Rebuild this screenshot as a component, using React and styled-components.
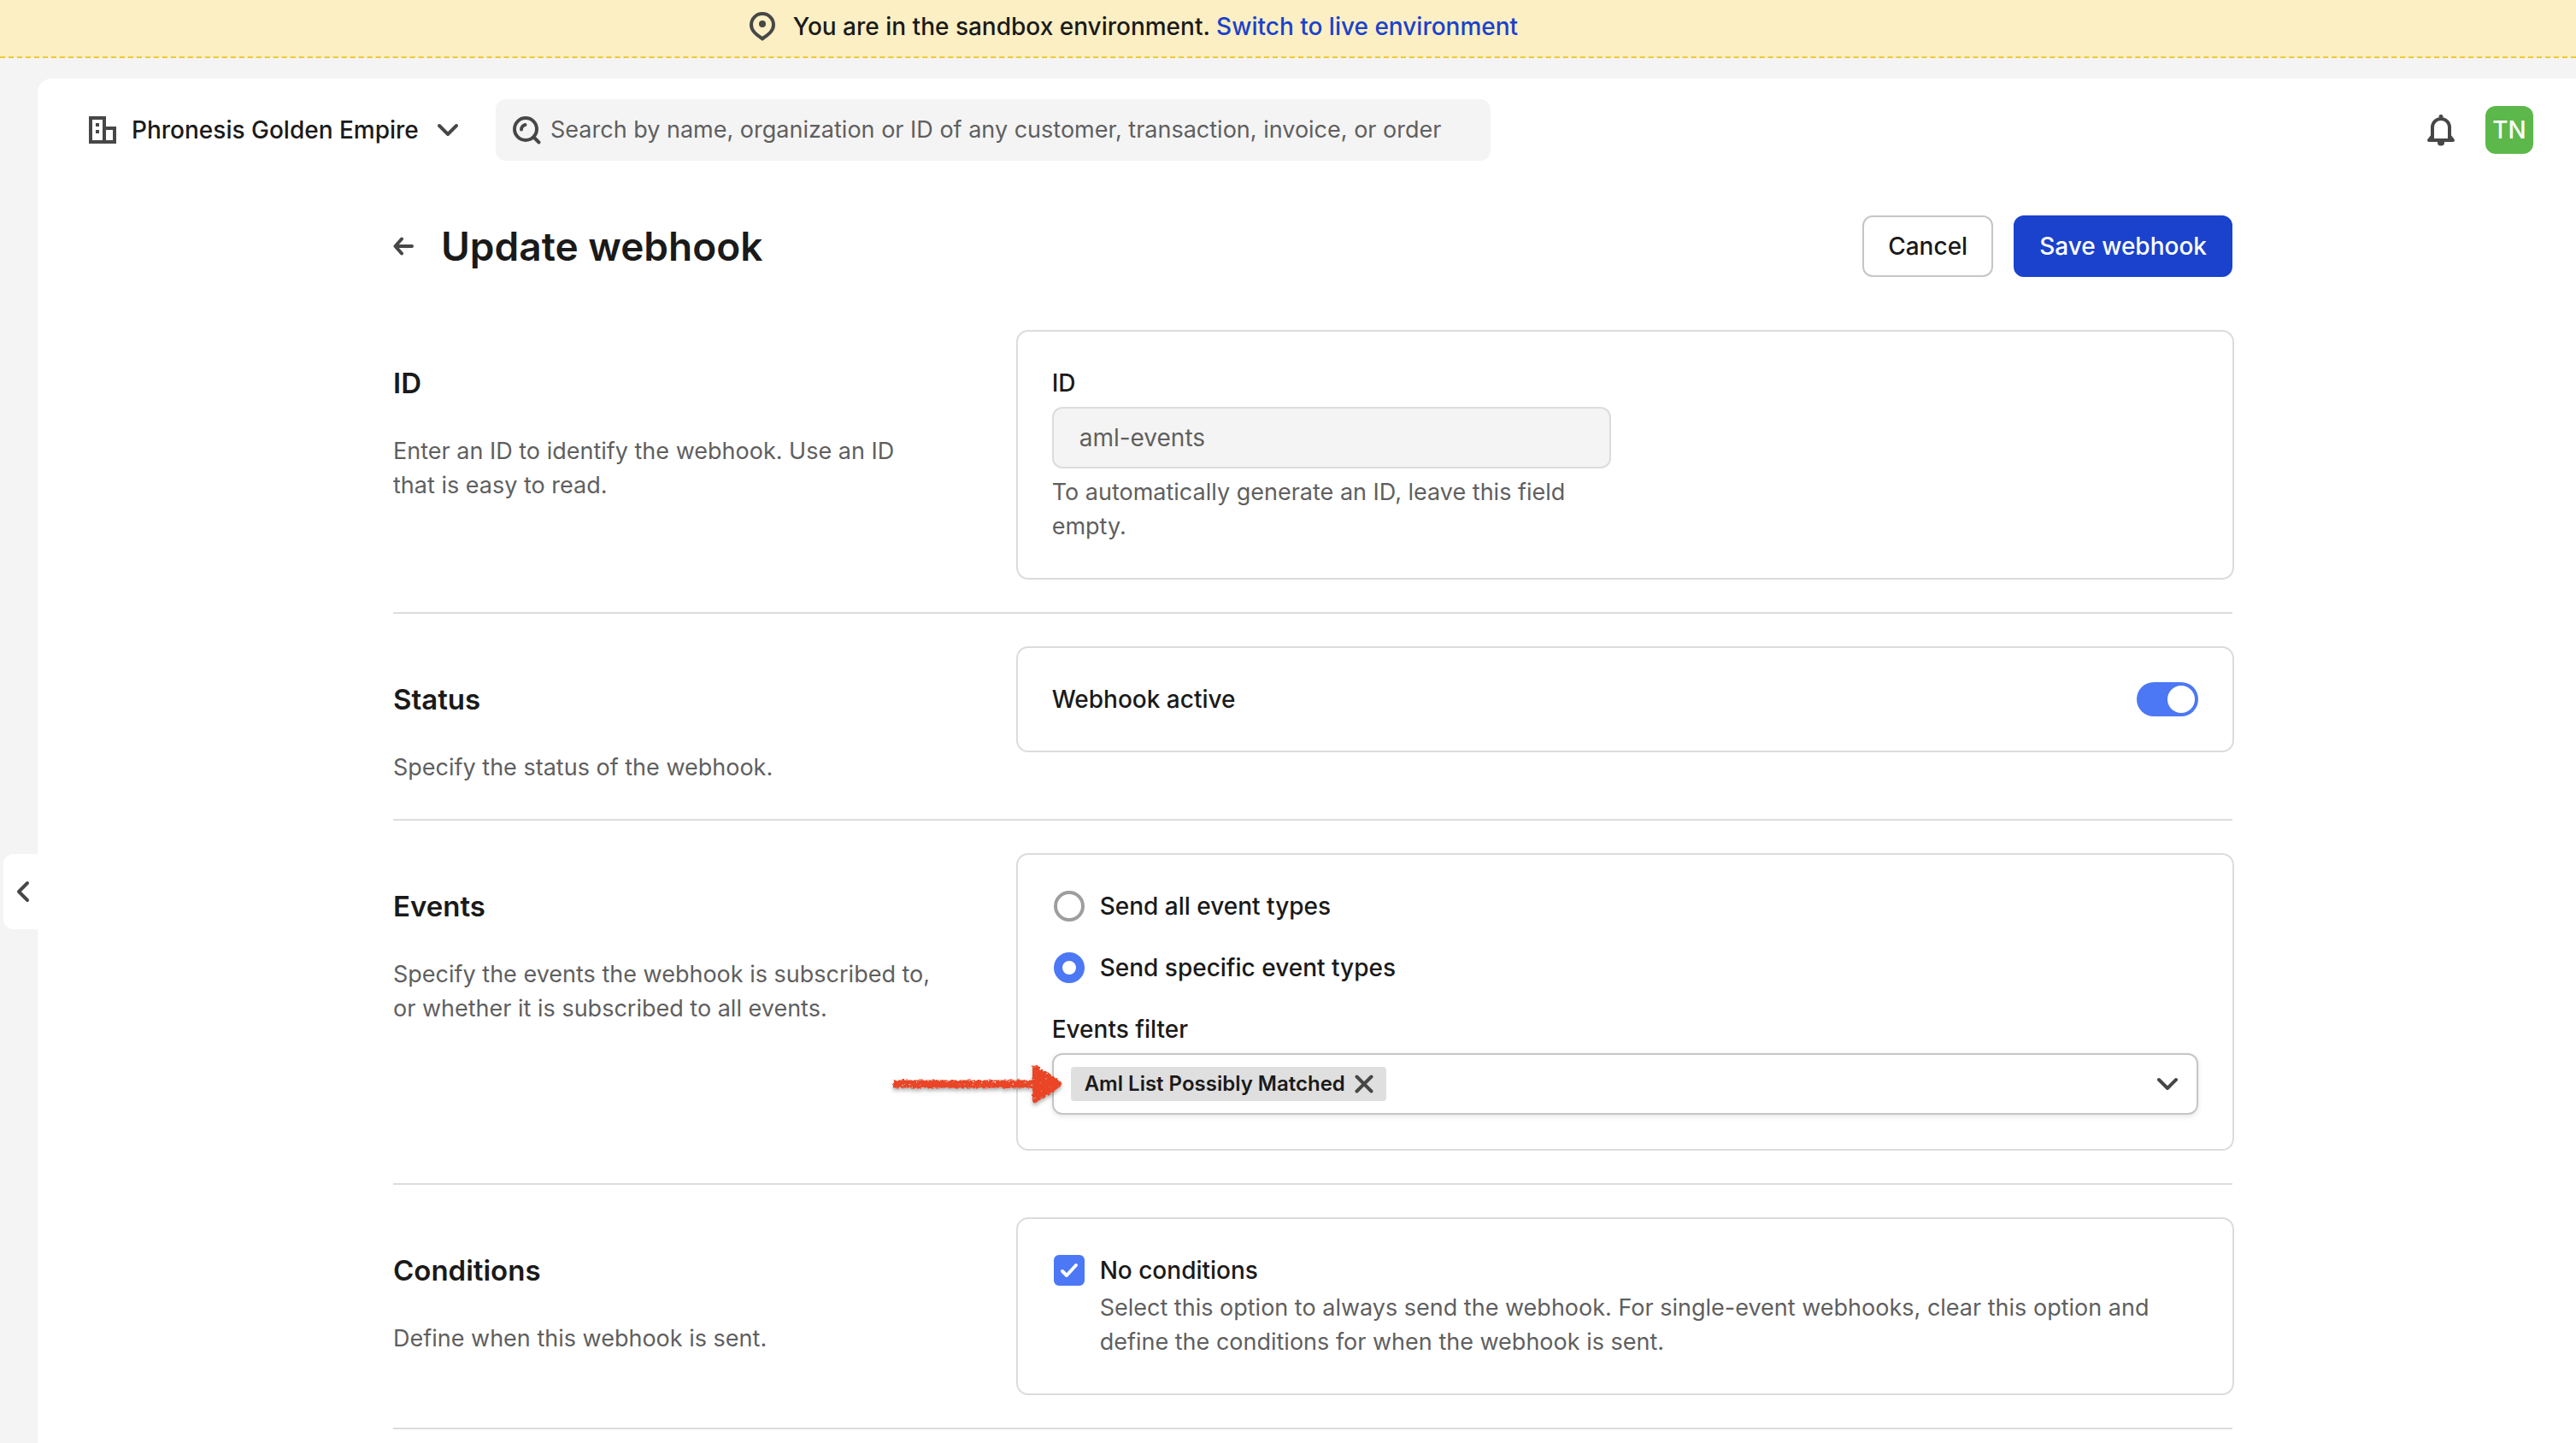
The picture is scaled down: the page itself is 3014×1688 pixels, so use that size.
import React, { useState } from "react";
import styled, { createGlobalStyle } from "styled-components";

const color = {
  text: "#1a1a1a",
  muted: "#5f5f5f",
  icon: "#474747",
  line: "#dcdcdc",
  control: "#c6c6c6",
  surface: "#f4f4f4",
  primary: "#1a42cc",
  accent: "#4c78f5",
};

const GlobalStyle = createGlobalStyle`
  *, *::before, *::after { box-sizing: border-box; }
  body {
    margin: 0;
    background: ${color.surface};
    color: ${color.text};
    font: 400 28px/40px Inter, "Liberation Sans", sans-serif;
  }
  button, input { font: inherit; color: inherit; }
  h1, h2, p { margin: 0; }
`;

const Page = styled.div`
  min-height: 100vh;
  display: flex;
  flex-direction: column;
`;

const Banner = styled.div`
  display: flex;
  justify-content: center;
  gap: 16px;
  height: 68px;
  padding: 11px 366px 0 0;
  background: #fbefc3;
  border-bottom: 2px dashed #ecc83c;
  font-weight: 500;
  white-space: nowrap;
`;

const BannerLink = styled.a`
  color: ${color.primary};
  text-decoration: none;
`;

const Body = styled.div`
  flex: 1;
  display: flex;
`;

const Rail = styled.aside`
  flex: 0 0 44px;
  padding: 931px 0 0 4px;
`;

const RailToggle = styled.button`
  display: flex;
  align-items: center;
  justify-content: center;
  width: 40px;
  height: 88px;
  padding: 0;
  border: 0;
  border-radius: 12px 0 0 12px;
  background: #fff;
`;

const Shell = styled.div`
  flex: 1;
  min-width: 0;
  margin-top: 24px;
  background: #fff;
  border-top-left-radius: 16px;
`;

const TopBar = styled.header`
  display: flex;
  align-items: center;
  padding: 24px 50px 24px 56px;
`;

const OrgButton = styled.button`
  display: flex;
  align-items: center;
  gap: 14px;
  width: 480px;
  padding: 0;
  border: 0;
  background: none;
  font-weight: 500;
  white-space: nowrap;
`;

const SearchBox = styled.label`
  display: flex;
  align-items: center;
  gap: 8px;
  width: 1164px;
  height: 72px;
  padding: 0 16px;
  border-radius: 12px;
  background: ${color.surface};
`;

const SearchInput = styled.input`
  flex: 1;
  min-width: 0;
  padding: 0;
  border: 0;
  outline: 0;
  background: none;
  font-size: 27px;
  &::placeholder { color: ${color.muted}; opacity: 1; }
`;

const TopActions = styled.div`
  display: flex;
  align-items: center;
  gap: 32px;
  margin-left: auto;
`;

const IconButton = styled.button`
  display: flex;
  padding: 0;
  border: 0;
  background: none;
`;

const Avatar = styled.button`
  width: 56px;
  height: 56px;
  padding: 0;
  border: 0;
  border-radius: 12px;
  background: #5cb84a;
  color: #fff;
  font-weight: 500;
`;

const Main = styled.main`
  max-width: 2170px;
  margin: 0 auto;
  padding: 40px 0 0 16px;
`;

const PageHeader = styled.div`
  display: flex;
  align-items: center;
  gap: 32px;
  margin-bottom: 24px;
  padding-right: 2px;
`;

const Title = styled.h1`
  flex: 1;
  font-size: 46px;
  line-height: 72px;
  font-weight: 600;
`;

const Actions = styled.div`
  display: flex;
  gap: 24px;
`;

const Button = styled.button`
  height: 72px;
  padding: 0 28px;
  border: 2px solid ${(p) => (p.$primary ? color.primary : color.control)};
  border-radius: 12px;
  background: ${(p) => (p.$primary ? color.primary : "#fff")};
  color: ${(p) => (p.$primary ? "#fff" : color.text)};
  font-weight: 500;
`;

const Section = styled.section`
  display: grid;
  grid-template-columns: minmax(0, 1fr) minmax(0, 2fr);
  gap: 16px;
  align-items: start;
  padding: 38px 0;
`;

const Divider = styled.hr`
  height: 2px;
  margin: 0 2px 0 0;
  border: 0;
  background: ${color.line};
`;

const Intro = styled.div`
  display: flex;
  flex-direction: column;
  gap: 40px;
  padding: 42px 72px 2px 0;
`;

const SectionTitle = styled.h2`
  font-size: 33px;
  line-height: 40px;
  font-weight: 600;
`;

const Muted = styled.p`
  color: ${color.muted};
  font-size: 27px;
`;

const Card = styled.div`
  display: flex;
  flex-direction: column;
  gap: ${(p) => p.$gap || 0}px;
  padding: 40px;
  border: 2px solid ${color.line};
  border-radius: 14px;
`;

const Field = styled.div`
  display: flex;
  flex-direction: column;
  gap: 8px;
  max-width: ${(p) => (p.$narrow ? "654px" : "none")};
`;

const Label = styled.label`
  font-weight: 500;
`;

const TextInput = styled.input`
  width: 100%;
  height: 72px;
  padding: 0 30px;
  border: 2px solid ${color.line};
  border-radius: 12px;
  background: ${color.surface};
  color: ${color.muted};
`;

const SwitchRow = styled.div`
  display: flex;
  justify-content: space-between;
`;

const Switch = styled.input`
  appearance: none;
  display: flex;
  width: 72px;
  height: 40px;
  margin: 0;
  padding: 4px;
  border-radius: 20px;
  background: ${color.control};
  &::before {
    content: "";
    width: 32px;
    height: 32px;
    border-radius: 50%;
    background: #fff;
  }
  &:checked {
    justify-content: flex-end;
    background: ${color.accent};
  }
`;

const Option = styled.label`
  display: flex;
  align-items: center;
  gap: 18px;
  padding-left: 2px;
  font-weight: 500;
`;

const Radio = styled.input`
  appearance: none;
  width: 36px;
  height: 36px;
  margin: 0;
  border: 4px solid #9e9e9e;
  border-radius: 50%;
  background: #fff;
  &:checked { border: 10px solid ${color.accent}; }
`;

const CheckMark = styled.span`
  display: grid;
  width: 36px;
  height: 36px;
  > * { grid-area: 1 / 1; }
  > svg { place-self: center; pointer-events: none; }
`;

const Checkbox = styled.input`
  appearance: none;
  width: 36px;
  height: 36px;
  margin: 0;
  border: 4px solid #9e9e9e;
  border-radius: 6px;
  background: #fff;
  &:checked {
    border-color: ${color.accent};
    background: ${color.accent};
  }
`;

const OptionHelp = styled(Muted)`
  padding: 4px 0 0 56px;
`;

const MultiSelect = styled.div`
  position: relative;
  display: flex;
  align-items: center;
  justify-content: space-between;
  height: 72px;
  padding: 0 14px 0 20px;
  border: 2px solid ${color.control};
  border-radius: 12px;
  background: #fff;
  box-shadow: 0 2px 6px rgba(0, 0, 0, 0.1);
`;

const Chip = styled.span`
  display: flex;
  align-items: center;
  gap: 10px;
  height: 40px;
  padding: 0 14px 0 16px;
  border-radius: 4px;
  background: #dfdfdf;
  font-size: 24px;
  font-weight: 600;
`;

const Pointer = styled.svg`
  position: absolute;
  left: -192px;
  top: 2px;
  overflow: visible;
  filter: drop-shadow(0 3px 2px rgba(0, 0, 0, 0.3));
`;

function Icon({ size = 40, box = 40, children, w = 4, ...rest }) {
  return (
    <svg width={size} height={size} viewBox={`0 0 ${box} ${box}`} fill="none" stroke={color.icon}
      strokeWidth={w} strokeLinecap="round" strokeLinejoin="round" aria-hidden="true" {...rest}>
      {children}
    </svg>
  );
}

const PinIcon = () => (
  <Icon>
    <path d="M20 5a13 13 0 0 1 13 13c0 8-7.500 12-13 16.500C14.500 30 7 26 7 18A13 13 0 0 1 20 5z" />
    <circle cx="20" cy="17" r="4" fill={color.icon} stroke="none" />
  </Icon>
);

const BuildingIcon = () => (
  <Icon strokeLinecap="butt" strokeLinejoin="miter">
    <path d="M6 6h16v28H6zM22 18h12v16H22" />
    <path d="M12 14h4M12 22h4" />
  </Icon>
);

const ChevronIcon = ({ dir = "down" }) => (
  <Icon w={4}>
    <path d={dir === "down" ? "M10 15l10 10 10-10" : "M28 10L18 20l10 10"} />
  </Icon>
);

const SearchIcon = () => (
  <Icon>
    <circle cx="19" cy="19" r="13" />
    <path d="M28.500 28.500L34.500 34.500M14 19.500a5.500 5.500 0 0 1 4.500-5.500" />
  </Icon>
);

const BellIcon = () => (
  <Icon>
    <path d="M10 31V17a10 10 0 0 1 20 0v14" />
    <path d="M6 32h28M10 27l-3.500 4.500M30 27l3.500 4.500" />
    <path d="M17 34h6v1a3 2.500 0 0 1-6 0zM18.500 4.500a1.500 1.500 0 0 1 3 0z" fill={color.icon} strokeWidth="2" />
  </Icon>
);

const BackIcon = () => (
  <Icon size={24} box={24}>
    <path d="M22 12H3M10 3.500L2.500 12 10 20.500" />
  </Icon>
);

const CloseIcon = () => (
  <Icon size={24} box={24}>
    <path d="M3.500 3.500l17 17M20.500 3.500l-17 17" />
  </Icon>
);

function CrayonArrow() {
  return (
    <Pointer width="204" height="64" viewBox="0 0 204 64" aria-hidden="true">
      <filter id="crayon" filterUnits="userSpaceOnUse" x="-6" y="0" width="216" height="64">
        <feTurbulence type="fractalNoise" baseFrequency="0.28" numOctaves="2" seed="4" result="noise" />
        <feDisplacementMap in="SourceGraphic" in2="noise" scale="5" xChannelSelector="R" yChannelSelector="G" result="rough" />
        <feColorMatrix in="noise" type="matrix" values="0 0 0 0 0  0 0 0 0 0  0 0 0 0 0  0 0 -14 0 10.800" result="specks" />
        <feComposite in="rough" in2="specks" operator="in" />
      </filter>
      <g filter="url(#crayon)" fill="#ea4426" stroke="#ea4426" strokeLinejoin="round">
        <path d="M4 32H172" strokeWidth="9" />
        <path d="M170 13L199 32L170 51z" strokeWidth="6" />
      </g>
    </Pointer>
  );
}

function SettingsSection({ title, text, gap, children }) {
  return (
    <>
      <Section>
        <Intro>
          <SectionTitle>{title}</SectionTitle>
          <Muted>{text}</Muted>
        </Intro>
        <Card $gap={gap}>{children}</Card>
      </Section>
      <Divider />
    </>
  );
}

export default function App() {
  const [active, setActive] = useState(true);
  const [mode, setMode] = useState("specific");
  const [unconditional, setUnconditional] = useState(true);

  return (
    <Page>
      <GlobalStyle />
      <Banner>
        <PinIcon />
        <span>
          You are in the sandbox environment. <BannerLink href="#live">Switch to live environment</BannerLink>
        </span>
      </Banner>
      <Body>
        <Rail>
          <RailToggle aria-label="Expand navigation"><ChevronIcon dir="left" /></RailToggle>
        </Rail>
        <Shell>
          <TopBar>
            <OrgButton>
              <BuildingIcon />
              Phronesis Golden Empire
              <ChevronIcon />
            </OrgButton>
            <SearchBox>
              <SearchIcon />
              <SearchInput
                type="search"
                aria-label="Search"
                placeholder="Search by name, organization or ID of any customer, transaction, invoice, or order"
              />
            </SearchBox>
            <TopActions>
              <IconButton aria-label="Notifications"><BellIcon /></IconButton>
              <Avatar>TN</Avatar>
            </TopActions>
          </TopBar>
          <Main>
            <PageHeader>
              <IconButton aria-label="Back"><BackIcon /></IconButton>
              <Title>Update webhook</Title>
              <Actions>
                <Button>Cancel</Button>
                <Button $primary>Save webhook</Button>
              </Actions>
            </PageHeader>

            <SettingsSection title="ID" text="Enter an ID to identify the webhook. Use an ID that is easy to read.">
              <Field $narrow>
                <Label htmlFor="webhook-id">ID</Label>
                <TextInput id="webhook-id" value="aml-events" disabled readOnly />
                <Muted>To automatically generate an ID, leave this field empty.</Muted>
              </Field>
            </SettingsSection>

            <SettingsSection title="Status" text="Specify the status of the webhook.">
              <SwitchRow>
                <Label htmlFor="webhook-active">Webhook active</Label>
                <Switch id="webhook-active" type="checkbox" role="switch" checked={active}
                  onChange={(e) => setActive(e.target.checked)} />
              </SwitchRow>
            </SettingsSection>

            <SettingsSection
              title="Events"
              text="Specify the events the webhook is subscribed to, or whether it is subscribed to all events."
              gap={32}
            >
              <Option>
                <Radio type="radio" name="mode" checked={mode === "all"} onChange={() => setMode("all")} />
                Send all event types
              </Option>
              <Option>
                <Radio type="radio" name="mode" checked={mode === "specific"} onChange={() => setMode("specific")} />
                Send specific event types
              </Option>
              <Field>
                <Label as="span" id="filter-label">Events filter</Label>
                <MultiSelect role="group" aria-labelledby="filter-label">
                  <Chip>
                    Aml List Possibly Matched
                    <IconButton aria-label="Remove Aml List Possibly Matched"><CloseIcon /></IconButton>
                  </Chip>
                  <IconButton aria-label="Open events filter"><ChevronIcon /></IconButton>
                  <CrayonArrow />
                </MultiSelect>
              </Field>
            </SettingsSection>

            <SettingsSection title="Conditions" text="Define when this webhook is sent.">
              <Option>
                <CheckMark>
                  <Checkbox type="checkbox" checked={unconditional} aria-describedby="conditions-help"
                    onChange={(e) => setUnconditional(e.target.checked)} />
                  <Icon size={24} box={24} stroke="#fff" w={4}><path d="M4 13l5 5L20 6" /></Icon>
                </CheckMark>
                No conditions
              </Option>
              <OptionHelp id="conditions-help">
                Select this option to always send the webhook. For single-event webhooks, clear this option and
                define the conditions for when the webhook is sent.
              </OptionHelp>
            </SettingsSection>
          </Main>
        </Shell>
      </Body>
    </Page>
  );
}
